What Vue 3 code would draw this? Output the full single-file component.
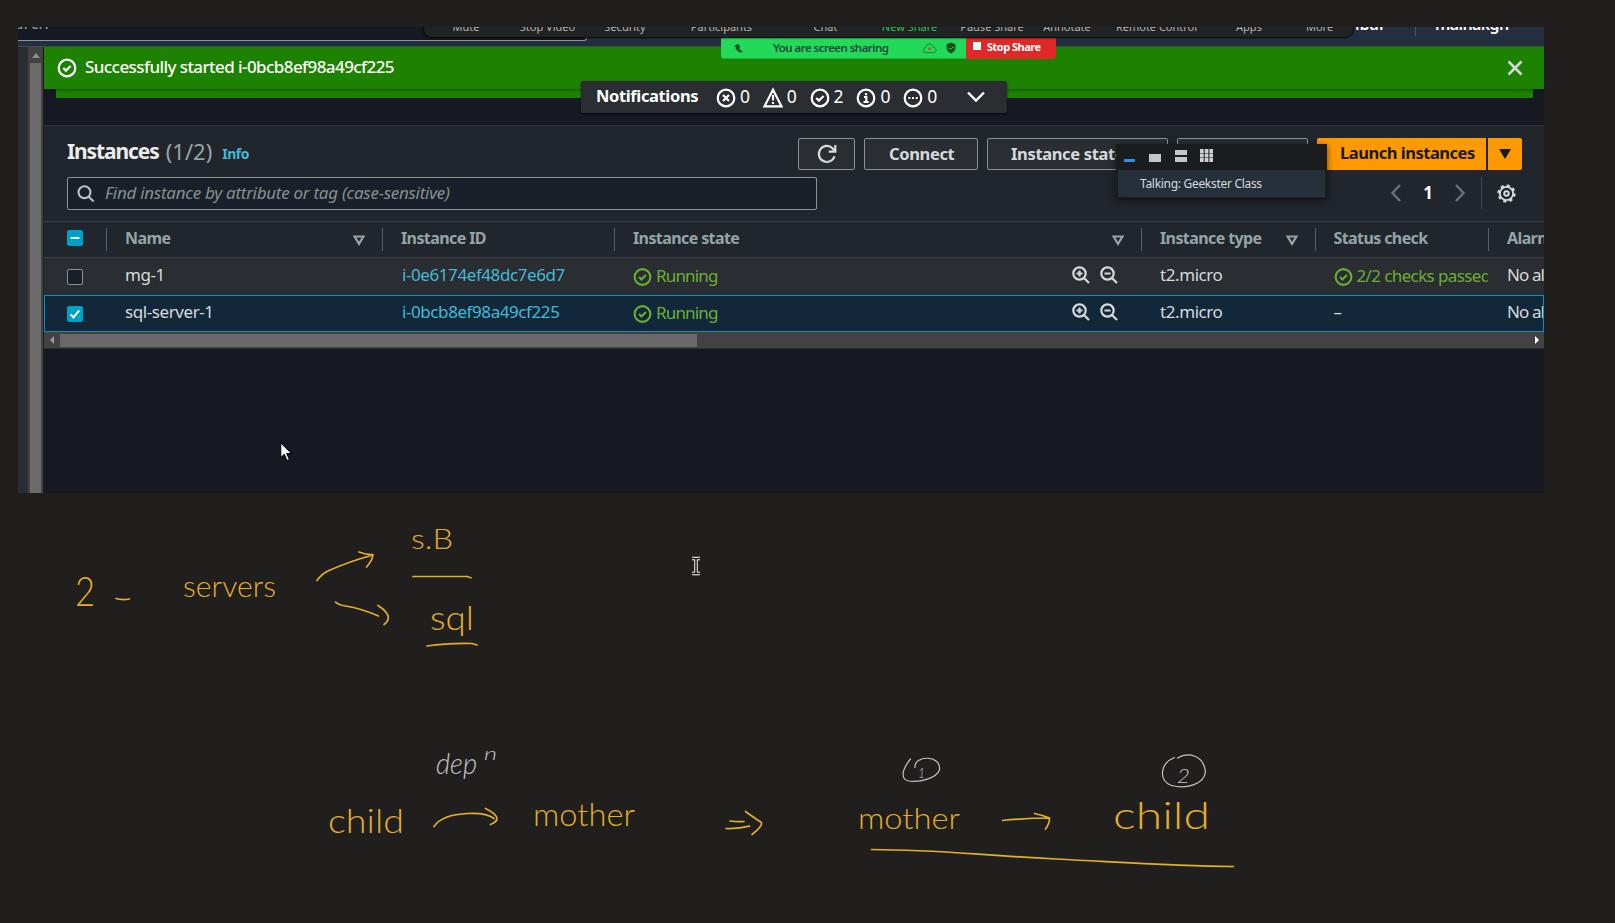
<script setup>
const controls = [
  { label: 'Mute', x: 435, w: 26 },
  { label: 'Stop Video', x: 502, w: 55 },
  { label: 'Security', x: 587, w: 40 },
  { label: 'Participants', x: 675, w: 57 },
  { label: 'Chat', x: 796, w: 23 },
  { label: 'New Share', x: 865, w: 53, active: true },
  { label: 'Pause Share', x: 944, w: 60 },
  { label: 'Annotate', x: 1026, w: 46 },
  { label: 'Remote Control', x: 1099, w: 79 },
  { label: 'Apps', x: 1218, w: 26 },
  { label: 'More', x: 1288, w: 27 },
]
const notes = [
  { kind: 'error', n: 0 },
  { kind: 'warn', n: 0 },
  { kind: 'ok', n: 2 },
  { kind: 'info', n: 0 },
  { kind: 'busy', n: 0 },
]
const columns = [
  { label: 'Name', sort: true },
  { label: 'Instance ID' },
  { label: 'Instance state', sort: true },
  { label: 'Instance type', sort: true },
  { label: 'Status check' },
  { label: 'Alarm status' },
]
const rows = [
  { name: 'mg-1', id: 'i-0e6174ef48dc7e6d7', type: 't2.micro', check: '2/2 checks passed', selected: false },
  { name: 'sql-server-1', id: 'i-0bcb8ef98a49cf225', type: 't2.micro', check: '', selected: true },
]
const words = [
  { t: '2', x: 75, y: 606, w: 20, s: 41 },
  { t: 'servers', x: 183, y: 597, w: 93, s: 29 },
  { t: 's.B', x: 411, y: 549, w: 42, s: 27 },
  { t: 'sql', x: 430, y: 630, w: 44, s: 33 },
  { t: 'dep', x: 436, y: 774, w: 41, s: 30, pale: true },
  { t: 'n', x: 484, y: 760, w: 13, s: 18, pale: true },
  { t: 'child', x: 328, y: 833, w: 76, s: 33 },
  { t: 'mother', x: 533, y: 826, w: 102, s: 31 },
  { t: 'mother', x: 858, y: 829, w: 102, s: 29 },
  { t: 'child', x: 1113, y: 829, w: 97, s: 37 },
  { t: '1', x: 918, y: 778, w: 7, s: 14, pale: true },
  { t: '2', x: 1177, y: 783, w: 13, s: 19, pale: true },
]
</script>

<template>
  <div class="stage">
    <section class="shot">
      <header class="topbar">
        <div class="search-field"><span>Search</span></div>
        <div class="account"><span class="region">ibar</span><i></i><span class="user">mainakgh</span></div>
      </header>

      <div class="body">
        <aside class="rail"></aside>
        <div class="vscroll"><b></b><div class="vthumb"></div></div>
        <main class="content">
          <div class="flash">
            <svg class="ico" viewBox="0 0 20 20"><circle cx="10" cy="10" r="8.300" /><path d="M6.300 10l2.600 2.600L13.600 8" /></svg>
            <span class="flash-text">Successfully started i-0bcb8ef98a49cf225</span>
            <svg class="close" viewBox="0 0 16 16"><path d="M1.500 1.500l13 13M14.500 1.500l-13 13" /></svg>
          </div>
          <div class="flash-stack"></div>

          <section class="panel">
            <div class="heading">
              <h1>Instances</h1><span class="count">(1/2)</span><a class="info">Info</a>
              <div class="actions">
                <button class="btn refresh"><svg viewBox="0 0 20 20"><path d="M17.500 12.300A8 8 0 1 1 15.800 4.600L18 7.200M18.300 1v6.600h-6.600" /></svg></button>
                <button class="btn connect">Connect</button>
                <button class="btn state">Instance state</button>
                <button class="btn more"></button>
                <div class="launch"><button>Launch instances</button><button class="caret"><i></i></button></div>
              </div>
            </div>
            <div class="filter">
              <div class="query">
                <svg viewBox="0 0 20 20"><circle cx="8.300" cy="8" r="6.600" /><path d="M13 13l5.500 5.300" /></svg>
                <span>Find instance by attribute or tag (case-sensitive)</span>
              </div>
              <div class="pager">
                <svg class="chev" viewBox="0 0 10 18"><path d="M9 1L1.500 9 9 17" /></svg>
                <b>1</b>
                <svg class="chev" viewBox="0 0 10 18"><path d="M1 1l7.500 8L1 17" /></svg>
                <i></i>
                <svg class="gear" viewBox="0 0 20 20"><circle class="teeth" cx="10" cy="10" r="8.300" /><circle cx="10" cy="10" r="7" /><circle cx="10" cy="10" r="2.400" /></svg>
              </div>
            </div>

            <div class="table">
              <div class="row head">
                <div class="cell check"><span class="box on"><svg viewBox="0 0 16 16"><path d="M3 8h10" /></svg></span></div>
                <div v-for="c in columns" :key="c.label" class="cell">
                  <span>{{ c.label }}</span>
                  <svg v-if="c.sort" class="sort" viewBox="0 0 12 11"><path d="M1.600 1.500h8.800L6 8.800z" /></svg>
                </div>
              </div>
              <div v-for="r in rows" :key="r.id" class="row" :class="{ selected: r.selected }">
                <div class="cell check">
                  <span class="box" :class="{ on: r.selected }"><svg v-if="r.selected" viewBox="0 0 16 16"><path d="M3 8.500l3.200 3.500L12.800 4" /></svg></span>
                </div>
                <div class="cell">{{ r.name }}</div>
                <div class="cell link">{{ r.id }}</div>
                <div class="cell">
                  <svg class="ico good" viewBox="0 0 20 20"><circle cx="10" cy="10" r="8.300" /><path d="M6.300 10l2.600 2.600L13.600 8" /></svg>
                  <span class="good running">Running</span>
                  <span class="lenses">
                    <svg viewBox="0 0 18 18"><circle cx="7.500" cy="7.500" r="6.200" /><path d="M12 12l5 5M4.500 7.500h6M7.500 4.500v6" /></svg>
                    <svg viewBox="0 0 18 18"><circle cx="7.500" cy="7.500" r="6.200" /><path d="M12 12l5 5M4.500 7.500h6" /></svg>
                  </span>
                </div>
                <div class="cell">{{ r.type }}</div>
                <div class="cell">
                  <template v-if="r.check">
                    <svg class="ico good" viewBox="0 0 20 20"><circle cx="10" cy="10" r="8.300" /><path d="M6.300 10l2.600 2.600L13.600 8" /></svg>
                    <span class="good checks">{{ r.check }}</span>
                  </template>
                  <span v-else>–</span>
                </div>
                <div class="cell alarm">No alarms</div>
              </div>
            </div>
            <div class="hscroll"><i class="left"></i><div class="hthumb"></div><i class="right"></i></div>
          </section>
        </main>
      </div>

      <div class="share">
        <div class="sharing">
          <svg class="mic" viewBox="0 0 10 10"><path d="M0 2.500L3.500 0l3 1.500-.500 4 4 3.500-4 .500L2 5.500V3z" /></svg>
          <span>You are screen sharing</span>
          <svg class="cloud" viewBox="0 0 16 12"><path d="M3.500 10.500a2.800 2.800 0 0 1 0-5.500C4.500 0 11 0 12 4.500c4 .5 4 5.500 1 6z" /><circle cx="8" cy="6.500" r="1.500" /></svg>
          <svg class="shield" viewBox="0 0 10 12"><path d="M5 .5l4.500 1.800V6c0 2.500-2 4.500-4.500 5.500C2.500 10.500.5 8.500.5 6V2.300z" /><path class="tick" d="M3 6l1.500 1.500L7.500 4.500" /></svg>
        </div>
        <div class="stop"><i></i><span>Stop Share</span></div>
      </div>
      <div class="meeting">
        <span v-for="c in controls" :key="c.label" :class="{ active: c.active }" :style="{ left: c.x - 406 + 'px', width: c.w + 'px' }">{{ c.label }}</span>
      </div>
      <div class="notifications">
        <b>Notifications</b>
        <span v-for="n in notes" :key="n.kind" class="note">
          <svg viewBox="0 0 20 20">
            <path v-if="n.kind === 'warn'" d="M10 1.700L18.500 18.300H1.500zM10 7v5.500M10 14v2" />
            <circle v-else cx="10" cy="10" r="8.300" />
            <path v-if="n.kind === 'error'" d="M7 7l6 6M13 7l-6 6" />
            <path v-if="n.kind === 'ok'" d="M6.300 10l2.600 2.600L13.600 8" />
            <path v-if="n.kind === 'info'" d="M8 9h2.300v5M7.500 14h5.200M10 5v2.200" />
            <path v-if="n.kind === 'busy'" d="M5.300 10h2M9 10h2M12.700 10h2" />
          </svg>{{ n.n }}
        </span>
        <svg class="down" viewBox="0 0 18 12"><path d="M1 1.500l8 8 8-8" /></svg>
      </div>
      <div class="talking">
        <div class="modes">
          <svg viewBox="0 0 100 20"><path class="blue" d="M1 12h11v3H1z" /><path d="M26 7h12v8H26zM52 3h12v5H52zM52 10h12v5H52z" /><path class="dots" d="M77 4h13M77 8.500h13M77 13h13" /></svg>
        </div>
        <div class="who">Talking: Geekster Class</div>
      </div>
    </section>

    <svg class="canvas" viewBox="0 0 1615 923">
      <g class="words">
        <text v-for="(w, i) in words" :key="i" :x="w.x" :y="w.y" :font-size="w.s" :textLength="w.w" lengthAdjust="spacingAndGlyphs" :class="{ pale: w.pale }">{{ w.t }}</text>
      </g>
      <g class="ink">
        <path d="M116 598.500q6 1.800 13.500.5" />
        <path d="M317 580.500q5-7 12-10 20-9 44-15.500M359 552q8 3 14 2.500-.5 6-6.500 12.500" />
        <path d="M335.500 602q3 3 10 4 16 2.500 33 10M378 605.500q17 11 6 19" />
        <path d="M413 576.500h54l4 1.300M427 646q20-3 45-2.500l5 1.500" />
        <path d="M434 826.500q8-12 34-13 18-1 26 5M485.500 808.500q20 10 5 16" />
        <path d="M730 821q8 1 14 .5M726 828.500q12 .5 23.500-2.300M745.500 811.500q11 8 16 11 1 4-9.500 12" />
        <path d="M1002.500 820.500q24-2.500 47-2.500M1034.500 813.500q9 2 15 4.500 0 6-4 11" />
        <path d="M871.500 849.500c70 .5 90 4.500 185 9.500s120 7 177 7.500" />
      </g>
      <g class="ink pale">
        <path d="M910.500 759c-9 11-10 20-2 22 12 1.500 28-3 31-11 2-16-26-14.500-24.500-2.500" />
        <path d="M1174.500 757.500c-15 6-16 24-3 28 14 4 33-1 34-14-2-16-17-20-28-13.500" />
      </g>
    </svg>

    <svg class="pointer" viewBox="0 0 12 20"><path d="M.8 1v14.500l3.500-3.300 2.800 6.300 2.300-1-2.800-6h4.800z" /></svg>
    <svg class="ibeam" viewBox="0 0 10 18"><path class="edge" d="M1 1.500h3l1 1 1-1h3M5 2.500v13M1 16.500h3l1-1 1 1h3" /><path d="M1 1.500h3l1 1 1-1h3M5 2.500v13M1 16.500h3l1-1 1 1h3" /></svg>
  </div>
</template>

<style>
body { margin: 0; background: #211f1e; }
</style>

<style scoped>
* { box-sizing: border-box; }
.stage { position: relative; width: 1615px; height: 923px; overflow: hidden; background: #211f1e; padding: 27px 0 0 18px; font-family: "Noto Sans", "Open Sans", sans-serif; }
svg { fill: none; flex: none; overflow: visible; }
.shot { position: relative; width: 1526px; height: 466px; overflow: hidden; background: #161921; color: #d5dbdb; display: flex; flex-direction: column; }
.topbar { height: 20px; flex: none; display: flex; justify-content: space-between; background: #232f3e; border-bottom: 1px solid #454955; }
.search-field { width: 569px; height: 14px; background: #161921; border: solid #8b979b; border-width: 0 1px 1px 0; border-radius: 0 0 3px; overflow: hidden; color: #95a5a6; font-size: 17px; }
.search-field span { display: block; margin: -17px 0 0 -23px; line-height: 26px; }
.account { display: flex; color: #fff; font-size: 16px; font-weight: 600; }
.account span { line-height: 24px; margin-top: -15px; height: 24px; }
.region { width: 60px; }
.account i { width: 1px; height: 9px; background: #4a5666; margin-right: 19px; }
.user { width: 109px; letter-spacing: -.6px; }
.body { flex: 1; display: flex; }
.rail { width: 10px; background: #2a2e34; }
.vscroll { width: 16px; background: #424242; border-right: 1px solid #1d1f22; padding: 0 2px; }
.vscroll b { display: block; height: 11px; width: 0; margin: 0 0 5px 2px; border: solid transparent; border-width: 6px 4px 5px; border-bottom-color: #8d8d8d; }
.vthumb { height: 430px; background: #6b6b6b; }
.content { width: 1500px; }
.flash { position: relative; z-index: 1; height: 42px; background: #1d8102; display: flex; align-items: center; padding: 0 21px 0 13px; box-shadow: 0 1px 3px #0006; }
.ico { width: 20px; height: 20px; stroke: #fff; stroke-width: 2.200; }
.flash-text { color: #fff; font-size: 17px; font-weight: 500; margin: -3px 0 0 8px; letter-spacing: -.58px; }
.close { width: 16px; height: 16px; margin-left: auto; stroke: #d5dbdb; stroke-width: 2.500; }
.flash-stack { height: 9px; margin: 0 11px 0 12px; background: #1d8102; }
.panel { margin-top: 27px; background: #21252c; border-top: 1px solid #2d3137; }
.heading { display: flex; padding: 12px 22px 0 23px; height: 51px; }
h1 { margin: 0; font-size: 21px; line-height: 27px; letter-spacing: -1.1px; color: #eaeded; }
.count { font-size: 22px; line-height: 26px; margin-left: 7px; color: #95a5a6; }
.info { font-size: 14px; line-height: 32px; font-weight: 700; color: #44b9d6; margin-left: 10px; letter-spacing: -.5px; }
.actions { display: flex; margin-left: auto; gap: 9px; height: 32px; }
button { font: inherit; padding: 0; }
.btn { background: #2a2e33; border: 1px solid #879596; border-radius: 2px; color: #d5dbdb; font-size: 16.500px; font-weight: 700; letter-spacing: -.35px; line-height: 27px; padding-bottom: 2px; text-align: left; }
.refresh { width: 57px; display: flex; align-items: center; justify-content: center; padding: 0; }
.refresh svg { width: 20px; height: 20px; stroke: #d5dbdb; stroke-width: 2.200; }
.connect { width: 114px; padding-left: 24px; }
.state { width: 181px; padding-left: 23px; }
.more { width: 131px; }
.launch { display: flex; gap: 2px; width: 205px; }
.launch button { width: 169px; border: 0; background: #f90; color: #16191f; border-radius: 2px 0 0 2px; font-size: 16.500px; font-weight: 700; letter-spacing: -.48px; line-height: 28px; text-align: left; padding: 0 0 2px 23px; white-space: nowrap; }
.launch .caret { width: 34px; padding: 0 0 0 11px; border-radius: 0 2px 2px 0; }
.caret i { display: block; width: 0; border: 6px solid transparent; border-top: 10px solid #16191f; border-bottom: 0; }
.filter { display: flex; justify-content: space-between; padding: 0 22px 0 23px; height: 44px; }
.query { width: 750px; height: 33px; border: 1px solid #879596; border-radius: 2px; background: #1a2029; display: flex; align-items: center; padding-left: 9px; }
.query svg { width: 18px; height: 18px; stroke: #b9c2c4; stroke-width: 2.300; }
.query span { margin: -3px 0 0 10px; font-size: 17px; font-style: italic; letter-spacing: -.28px; color: #84918f; white-space: nowrap; }
.pager { display: flex; align-items: center; height: 32px; }
.chev { width: 10px; height: 18px; stroke: #687078; stroke-width: 2.500; }
.pager b { width: 10px; text-align: center; margin: -2px 22px 0; color: #fff; font-size: 17px; }
.pager i { width: 1px; height: 32px; background: #414750; margin: 0 15px 0 16px; }
.gear { width: 19px; height: 19px; stroke: #d5dbdb; stroke-width: 2; margin-right: 6px; }
.teeth { stroke-dasharray: 3.260 3.260; stroke-width: 2.600; }
.table { border-top: 1px solid #3b4048; overflow: hidden; }
.row { display: grid; grid-template-columns: 62px 276px 232px 527px 173.500px 173.500px 56px; height: 37px; background: #2a2d31; color: #d5dbdb; font-size: 17px; letter-spacing: -.42px; }
.head { height: 36px; background: #21252c; color: #95a5a6; font-size: 16px; font-weight: 700; letter-spacing: -.6px; border-bottom: 1px solid #3b4048; }
.cell { position: relative; display: flex; align-items: center; padding: 0 0 4px 19px; min-width: 0; overflow: hidden; white-space: nowrap; }
.cell.check { padding: 0 0 0 23px; }
.selected .cell.check { padding-left: 22px; }
.head .cell { padding-bottom: 3px; }
.head .cell + .cell::before { content: ""; position: absolute; left: 0; top: 6px; width: 1px; height: 23px; background: #596168; }
.selected { background: #12283a; border: 1px solid #0f8fb5; grid-template-columns: 61px 276px 232px 527px 173.500px 173.500px 55px; }
.box { width: 16px; height: 16px; border: 1px solid #879596; border-radius: 2px; background: #1a2029; }
.box.on { background: #00a1c9; border-color: #00a1c9; }
.box svg { display: block; width: 14px; height: 14px; stroke: #fff; stroke-width: 2.300; }
.sort { width: 12px; height: 11px; stroke: #95a5a6; stroke-width: 2.200; margin: 4px 17px 0 auto; }
.cell.link { color: #44b9d6; padding-left: 20px; }
.cell .good { color: #6aaf35; }
.cell .ico.good { stroke: #6aaf35; margin: 5px 0 0; width: 19px; }
.good.running, .good.checks { margin-left: 4px; letter-spacing: -.85px; margin-top: 1px; }
.good.checks { letter-spacing: -.62px; }
.cell.alarm { letter-spacing: -.9px; }
.lenses { margin-left: auto; display: flex; gap: 10px; padding-right: 23px; }
.lenses svg { width: 18px; height: 18px; stroke: #d5dbdb; stroke-width: 2.200; }
.hscroll { height: 17px; background: #424242; border-bottom: 1px solid #2b2d30; display: flex; align-items: center; padding: 0 5px 0 6px; }
.hscroll i { border: 4px solid transparent; }
.left { border-right-color: #999 !important; border-left-width: 0 !important; }
.right { border-left-color: #fff !important; border-right-width: 0 !important; margin-left: auto; }
.hthumb { width: 637px; height: 13px; margin-left: 6px; background: #696969; }
.meeting { position: absolute; z-index: 4; left: 406px; top: -14px; width: 929px; height: 24px; border-radius: 8px; background: #212223; box-shadow: 0 0 2px 1px #050505; font-size: 11px; color: #b4b4b4; }
.meeting span { position: absolute; top: 6px; line-height: 16px; white-space: nowrap; display: flex; justify-content: center; }
.meeting .active { color: #23c552; }
.share { position: absolute; z-index: 3; left: 703px; top: 11px; width: 335px; height: 21px; display: flex; border-radius: 0 0 4px 4px; overflow: hidden; font-size: 11.500px; font-weight: 600; line-height: 18px; }
.sharing { width: 245px; background: #23d959; color: #1b4a3c; display: flex; align-items: center; border-bottom: 1px solid #18b443; }
.sharing svg { fill: #15501c; }
.mic { width: 9px; height: 9px; margin-left: 13px; }
.sharing span { width: 116px; margin: 0 33px 0 30px; white-space: nowrap; letter-spacing: -.55px; }
.sharing .cloud { width: 15px; height: 11px; fill: none; stroke: #187534; }
.sharing .cloud circle { fill: #e63b32; stroke: none; }
.shield { width: 10px; height: 12px; margin-left: 9px; }
.sharing .tick { stroke: #23d959; fill: none; }
.stop { flex: 1; background: #e02828; color: #fff; display: flex; font-weight: 700; font-size: 11px; white-space: nowrap; letter-spacing: -.5px; }
.stop i { width: 8px; height: 8px; background: #e4ffff; margin: 4px 6px 0 7px; }
.notifications { position: absolute; left: 563px; top: 54px; width: 426px; height: 32px; border-radius: 2px; background: #2a2e33; display: flex; align-items: center; padding: 0 22px 0 15px; color: #fff; font-size: 17.500px; box-shadow: 0 1px 2px #000a; z-index: 2; }
.notifications b { width: 120px; margin-top: -3px; font-size: 16.500px; letter-spacing: -.37px; }
.note { width: 46.800px; display: flex; align-items: center; gap: 4px; line-height: 28px; padding-bottom: 2px; }
.note svg { width: 20px; height: 20px; stroke: #fff; stroke-width: 2.200; margin-top: 3px; }
.down { width: 18px; height: 12px; stroke: #fff; stroke-width: 2.400; margin-left: auto; }
.talking { position: absolute; left: 1098px; top: 117px; width: 211px; height: 54px; background: #1b1c1e; box-shadow: 0 2px 7px #0009; z-index: 3; }
.modes { height: 26px; padding: 3px 0 0 7px; }
.modes svg { width: 100px; height: 20px; fill: #c5c6c7; }
.modes .blue { fill: #2f92ee; }
.dots { stroke: #d0d0d0; stroke-width: 4; stroke-dasharray: 3.700 1; }
.who { height: 27px; margin: 0 2px; background: #25303b; color: #d5dbdb; font-size: 12px; line-height: 27px; letter-spacing: -.3px; padding-left: 22px; white-space: nowrap; }
.canvas { position: absolute; left: 0; top: 0; width: 1615px; height: 923px; pointer-events: none; }
.words { fill: #e3ae2c; font-family: Lato, sans-serif; font-weight: 300; }
.words .pale { fill: #c4c4c4; font-style: italic; }
.ink { stroke: #e3ae2c; stroke-width: 1.700; stroke-linecap: round; stroke-linejoin: round; }
.ink.pale { stroke: #c4c4c4; stroke-width: 1.200; }
.pointer { position: absolute; left: 280px; top: 442px; width: 12px; height: 20px; fill: #fff; stroke: #000; }
.ibeam { position: absolute; left: 691px; top: 557px; width: 10px; height: 18px; stroke: #111; stroke-width: 1.500; }
.ibeam .edge { stroke: #fff; stroke-width: 3.500; }
</style>
